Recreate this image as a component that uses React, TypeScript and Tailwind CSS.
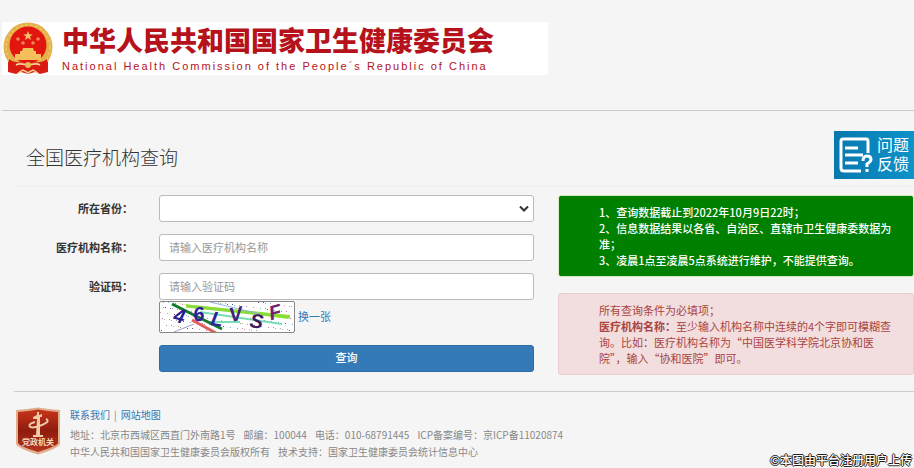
import type { ReactNode } from "react";

const fieldClass =
  "h-[27px] w-full rounded-[3px] border border-[#bbb] bg-white px-[9px] text-[11px] text-[#555] placeholder:text-[#999] outline-none";

function Emblem() {
  return (
    <svg viewBox="0 0 52 53" className="h-[53px] w-[52px] shrink-0" aria-hidden="true">
      <path d="M6 34L6 50L14 52L19 50L26 52L33 50L38 52L46 50L46 34Z" fill="#d8201a" />
      <circle cx="26" cy="25" r="24.5" fill="#e3b04b" />
      <circle cx="26" cy="25" r="22" fill="none" stroke="#ecc25c" strokeWidth="2" strokeDasharray="3 2" />
      <circle cx="26" cy="23" r="18.5" fill="#e2150f" />
      <path d="M26 9l1.2 3.3 3.5.1-2.7 2.1 1 3.4-3-2-3 2 1-3.4-2.7-2.1 3.5-.1z" fill="#f6c36b" />
      <g fill="#f08a4e">
        <circle cx="16" cy="17" r="1.8" />
        <circle cx="36" cy="17" r="1.8" />
        <circle cx="21" cy="21" r="1.8" />
        <circle cx="31" cy="21" r="1.8" />
      </g>
      <path d="M20 29l1-3h10l1 3h2v3h5v6H13v-6h5v-3z" fill="#f5c05a" />
      <path d="M7 37c6 5 11 2 19 4 8-2 13 1 19-4v10c-6 3-12 0-19 2-7-2-13 1-19-2z" fill="#dc1a14" />
      <path d="M14 43c5-3 8 1 12-1 4 2 7-2 12 1" fill="none" stroke="#f4cf96" strokeWidth="1.8" />
      <circle cx="26" cy="43" r="3" fill="#e9bb55" />
      <path d="M16 51l5-3 5 3 5-3 5 3" fill="none" stroke="#f3d79a" strokeWidth="1.3" />
    </svg>
  );
}

const letters = [
  { c: "4", x: 14, y: 21, r: 14, fill: "#2a1b93" },
  { c: "6", x: 33, y: 19, r: -8, fill: "#2f1d9c" },
  { c: "L", x: 51, y: 24, r: 10, fill: "#2d2398" },
  { c: "V", x: 69, y: 19, r: -10, fill: "#431c7c" },
  { c: "S", x: 90, y: 26, r: 8, fill: "#3f1b60" },
  { c: "F", x: 109, y: 17, r: -14, fill: "#70206f" },
];
const speckColors = ["#79b8d8", "#b57bbb", "#d59a8c", "#7cc487", "#555577"];

function Captcha() {
  return (
    <svg
      viewBox="0 0 134 30"
      role="img"
      aria-label="验证码"
      className="h-8 w-[136px] rounded-[2px] border border-[#888] bg-white"
    >
      {Array.from({ length: 150 }, (_, i) => (
        <rect key={i} x={(i * 47 + 3) % 133} y={(i * 31 + (i % 7) * 4) % 29} width="1" height="1" fill={speckColors[i % 5]} />
      ))}
      <path d="M14 1L130 13L128 17L70 9Z" fill="#8bea2e" />
      <path d="M26 4L130 15" stroke="#8bdc3b" strokeWidth="3" />
      <path d="M50 0L100 12" stroke="#8fb5e0" strokeWidth="1" />
      <path d="M40 10L122 22M50 20H80" stroke="#79ddb6" strokeWidth="2" />
      <path d="M12 2L62 27" stroke="#137a29" strokeWidth="3" />
      <path d="M32 18L56 31" stroke="#df5f57" strokeWidth="3" />
      <path d="M14 30L34 22" stroke="#a69ad0" strokeWidth="1" />
      {letters.map((l) => (
        <text
          key={l.c}
          x={l.x}
          y={l.y}
          fill={l.fill}
          fontSize="20"
          fontWeight="700"
          fontStyle="italic"
          fontFamily="Liberation Sans, sans-serif"
          transform={`rotate(${l.r} ${l.x + 6} ${l.y - 7})`}
        >
          {l.c}
        </text>
      ))}
    </svg>
  );
}

function Badge() {
  return (
    <svg viewBox="0 0 46 48" className="h-12 w-[46px] shrink-0" role="img" aria-label="党政机关">
      <defs>
        <linearGradient id="shield" x1="0" y1="0" x2="0" y2="1">
          <stop offset="0" stopColor="#c8341c" />
          <stop offset="0.5" stopColor="#8f1c0e" />
          <stop offset="1" stopColor="#b5361f" />
        </linearGradient>
      </defs>
      <path d="M1 3Q12 2 23 0.5Q34 2 45 3V37Q44 41 23 47.5Q2 41 1 37Z" fill="#dfae8b" />
      <path d="M3 5Q13 4 23 2.5Q33 4 43 5V36Q42 39 23 45Q4 39 3 36Z" fill="url(#shield)" />
      <path d="M21 28L22 12H18V10L22 8V5H24V8L27 7V10H25L25 28H28V30H18V28Z" fill="#f0c9a6" />
      <path d="M20 15C12 17 13 22 21 20C29 18 36 14 31 12" fill="none" stroke="#f0c9a6" strokeWidth="2" />
      <text x="23" y="38" textAnchor="middle" fontSize="8" fontWeight="700" fill="#f6d9bd" fontFamily="Noto Sans CJK SC, sans-serif">
        党政机关
      </text>
    </svg>
  );
}

function Row({ id, label, children }: { id: string; label: string; children: ReactNode }) {
  return (
    <div className="flex items-start gap-[26px]">
      <label htmlFor={id} className="h-[27px] w-[117px] shrink-0 text-right text-[11px] leading-[29px] font-bold text-[#333]">
        {label}
      </label>
      <div className="min-w-0 flex-1">{children}</div>
    </div>
  );
}

export default function App() {
  return (
    <div className="relative bg-[#f5f5f5] pb-2 font-['Liberation_Sans','Noto_Sans_CJK_SC',sans-serif] text-[#333]">
      <header className="ml-[2px] border-b border-[#ccc] pt-[22px] pb-[35px]">
        <div className="flex h-[53px] max-w-[546px] gap-2 bg-white whitespace-nowrap">
          <Emblem />
          <div className="pt-1 text-[#b5121b]">
            <h1 className="text-[27px] leading-8 font-black">中华人民共和国国家卫生健康委员会</h1>
            <p className="text-[11px] leading-4 tracking-[2px]">
              National Health Commission of the People´s Republic of China
            </p>
          </div>
        </div>
      </header>

      <div className="ml-4 flex items-center justify-between border-b border-[#eee] pt-5 pb-[7px]">
        <h2 className="pt-1 pl-[10px] font-['Noto_Sans_CJK_SC',sans-serif] text-[19px] leading-6 font-light">全国医疗机构查询</h2>
        <button
          type="button"
          className="flex h-12 w-20 items-center gap-1 bg-linear-to-r from-[#0878ae] to-[#0d93c9] pl-[5px] text-[16px] leading-[19px] text-white"
        >
          <svg viewBox="0 0 34 36" className="h-9 w-[34px] shrink-0" fill="none" stroke="white" strokeWidth="3" aria-hidden="true">
            <path d="M29 16V4Q29 2 27 2H4Q2 2 2 4V31Q2 34 5 34H22" />
            <path d="M6 11H19M6 18H24M6 26H19" />
            <path d="M24 24Q24 19 28 19Q32 19 32 22.500Q32 24.500 28 27V30M28 32V35" />
          </svg>
          <span>
            问题
            <br />
            反馈
          </span>
        </button>
      </div>

      <main className="ml-4 flex gap-6 pt-2">
        <form className="flex min-w-0 flex-1 flex-col gap-3" onSubmit={(e) => e.preventDefault()}>
          <Row id="province" label="所在省份：">
            <div className="relative">
              <select id="province" className={`${fieldClass} block appearance-none`}>
                <option value=""></option>
              </select>
              <svg
                viewBox="0 0 10 8"
                className="pointer-events-none absolute top-[10px] right-[5px] h-2 w-[10px]"
                fill="none"
                stroke="#333"
                strokeWidth="2"
                aria-hidden="true"
              >
                <path d="M1 1.5L5 5.5L9 1.5" />
              </svg>
            </div>
          </Row>
          <Row id="name" label="医疗机构名称：">
            <input id="name" type="text" placeholder="请输入医疗机构名称" className={`${fieldClass} block`} />
          </Row>
          <Row id="code" label="验证码：">
            <input id="code" type="text" placeholder="请输入验证码" className={`${fieldClass} block`} />
            <div className="flex items-center gap-[3px] pt-px">
              <Captcha />
              <a href="#" className="text-[11px] leading-4 text-[#337ab7]">
                换一张
              </a>
            </div>
          </Row>
          <button
            type="submit"
            className="ml-[143px] h-[27px] rounded-[3px] border border-[#2e6da4] bg-[#337ab7] text-[11px] font-medium text-white"
          >
            查询
          </button>
        </form>

        <aside className="flex w-[356px] shrink-0 flex-col gap-4 font-['Noto_Sans_CJK_SC',sans-serif] text-[11px] leading-4">
          <div className="rounded-[3px] border border-[#d6e9c6] bg-[green] py-2 pr-[14px] pl-10 font-medium text-white">
            <p>1、查询数据截止到2022年10月9日22时；</p>
            <p>2、信息数据结果以各省、自治区、直辖市卫生健康委数据为准；</p>
            <p>3、凌晨1点至凌晨5点系统进行维护，不能提供查询。</p>
          </div>
          <div className="rounded-[3px] border border-[#ebccd1] bg-[#f2dede] py-2 pr-[14px] pl-10 text-[#a94442]">
            <p>所有查询条件为必填项；</p>
            <p>
              <b>医疗机构名称：</b>
              <span>至少输入机构名称中连续的4个字即可模糊查</span>
              <br />
              <span>询。比如：医疗机构名称为“中国医学科学院北京协和医</span>
              <br />
              <span>院”，输入“协和医院”即可。</span>
            </p>
          </div>
        </aside>
      </main>

      <footer className="mt-4 ml-[14px] flex gap-[9px] border-t border-[#ccc] pt-[15px] pl-px font-['Noto_Sans_CJK_SC',sans-serif] text-[10px] leading-4 text-[#888]">
        <Badge />
        <div className="whitespace-nowrap">
          <nav className="flex gap-1">
            <a href="#" className="text-[#337ab7]">
              联系我们
            </a>
            <span>|</span>
            <a href="#" className="text-[#337ab7]">
              网站地图
            </a>
          </nav>
          <p className="flex gap-2 pt-1">
            <span>地址：北京市西城区西直门外南路1号</span>
            <span>邮编：100044</span>
            <span>电话：010-68791445</span>
            <span>ICP备案编号：京ICP备11020874</span>
          </p>
          <p className="flex gap-2 pt-px">
            <span>中华人民共和国国家卫生健康委员会版权所有</span>
            <span>技术支持：国家卫生健康委员会统计信息中心</span>
          </p>
        </div>
      </footer>

      <p className="absolute right-[2px] bottom-0 font-['Noto_Sans_CJK_SC',sans-serif] text-[12px] leading-4 font-medium whitespace-nowrap text-white [text-shadow:1px_0_#222,-1px_0_#222,0_1px_#222,0_-1px_#222]">
        ©本图由平台注册用户上传
      </p>
    </div>
  );
}
